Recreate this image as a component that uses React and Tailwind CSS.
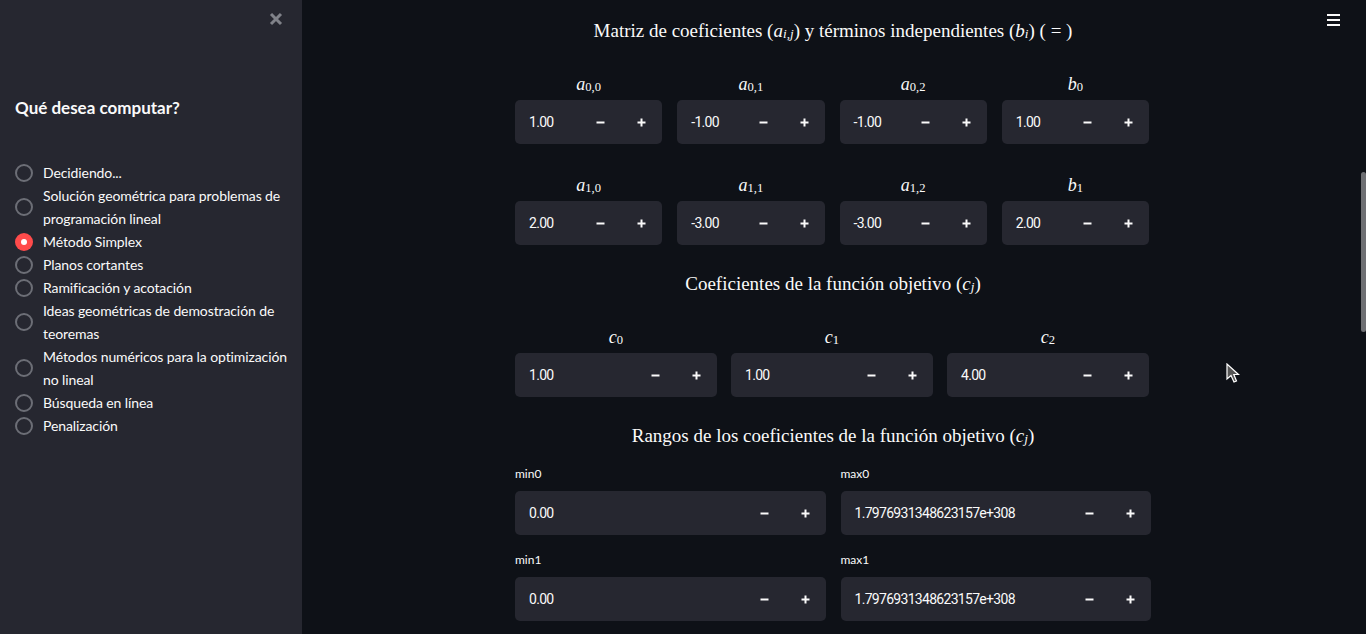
import React from 'react';

const options = [
  ['Decidiendo...'],
  ['Solución geométrica para problemas de', 'programación lineal'],
  ['Método Simplex'],
  ['Planos cortantes'],
  ['Ramificación y acotación'],
  ['Ideas geométricas de demostración de', 'teoremas'],
  ['Métodos numéricos para la optimización', 'no lineal'],
  ['Búsqueda en línea'],
  ['Penalización'],
];

const serif = { fontFamily: '"Liberation Serif", "DejaVu Serif", serif' };

// variable with subscript, KaTeX style
const Var = ({ v, sub, subItalic = false }) => (
  <span className="whitespace-nowrap">
    <span className="italic">{v}</span>
    <sub className={`relative top-[1px] text-[0.7em] ${subItalic ? 'italic' : ''}`}>{sub}</sub>
  </span>
);

const Heading = ({ children }) => (
  <div className="flex h-[26px] items-center justify-center text-[19px] text-[#fafafa]" style={serif}>
    <span>{children}</span>
  </div>
);

const MinusIcon = () => (
  <svg width="9" height="9" viewBox="0 0 9 9"><rect x="0.5" y="3.5" width="8" height="2" fill="#fafafa" /></svg>
);
const PlusIcon = () => (
  <svg width="9" height="9" viewBox="0 0 9 9">
    <rect x="0.5" y="3.5" width="8" height="2" fill="#fafafa" />
    <rect x="3.5" y="0.5" width="2" height="8" fill="#fafafa" />
  </svg>
);

const NumberInput = ({ value }) => (
  <div className="flex h-[44px] overflow-hidden rounded-[5px] bg-[#262730]">
    <div className="flex min-w-0 flex-1 items-center pl-[14px] text-[14px] text-[#fafafa] font-['Roboto'] tracking-[-0.7px]">
      {value}
    </div>
    <button type="button" className="flex w-[41px] items-center justify-center"><MinusIcon /></button>
    <button type="button" className="flex w-[41px] items-center justify-center"><PlusIcon /></button>
  </div>
);

const MathCell = ({ label, value }) => (
  <div className="flex flex-col">
    <div className="mb-[4px] flex h-[24px] items-center justify-center text-[18px] text-[#fafafa]" style={serif}>
      {label}
    </div>
    <NumberInput value={value} />
  </div>
);

const PlainCell = ({ label, value }) => (
  <div className="flex flex-col">
    <div className="mb-[9px] h-[16px] text-[12px] leading-[16px] text-[#fafafa]">{label}</div>
    <NumberInput value={value} />
  </div>
);

const Sidebar = () => (
  <div className="relative flex h-screen w-[302px] shrink-0 flex-col bg-[#262730] text-[#fafafa]">
    <button type="button" className="absolute left-[269px] top-[12px]">
      <svg width="14" height="14" viewBox="0 0 14 14">
        <path d="M2 2 L12 12 M12 2 L2 12" stroke="#808289" strokeWidth="3" />
      </svg>
    </button>
    <div className="mt-[96px] pl-[15px] text-[17px] font-bold leading-[24px]">Qué desea computar?</div>
    <div className="mt-[41px] flex flex-col pl-[15px]">
      {options.map((lines, i) => (
        <div key={i} className="flex items-center">
          {i === 2 ? (
            <span className="flex size-[18px] shrink-0 items-center justify-center rounded-full bg-[#ff4b4b]">
              <span className="size-[6px] rounded-full bg-white" />
            </span>
          ) : (
            <span className="size-[18px] shrink-0 rounded-full border-2 border-[#6c6e76]" />
          )}
          <div className="ml-[10px] text-[14px] leading-[23px] tracking-[-0.1px]">
            {lines.map((l) => (
              <div key={l} className="whitespace-nowrap">{l}</div>
            ))}
          </div>
        </div>
      ))}
    </div>
  </div>
);

export default function App() {
  return (
    <div className="flex h-screen w-full overflow-hidden bg-[#0e1117] font-['Lato'] text-[#fafafa]">
      <Sidebar />
      <div className="relative h-screen flex-1 pr-[2px]">
        <div className="mx-auto w-[636px] pt-[18px]">
          <Heading>
            Matriz de coeficientes (<Var v="a" sub="i,j" subItalic />) y términos independientes (<Var v="b" sub="i" subItalic />) ( = )
          </Heading>

          <div className="mt-[28px] grid w-[634px] grid-cols-4 gap-x-[15px]">
            <MathCell label={<Var v="a" sub="0,0" />} value="1.00" />
            <MathCell label={<Var v="a" sub="0,1" />} value="-1.00" />
            <MathCell label={<Var v="a" sub="0,2" />} value="-1.00" />
            <MathCell label={<Var v="b" sub="0" />} value="1.00" />
          </div>
          <div className="mt-[29px] grid w-[634px] grid-cols-4 gap-x-[15px]">
            <MathCell label={<Var v="a" sub="1,0" />} value="2.00" />
            <MathCell label={<Var v="a" sub="1,1" />} value="-3.00" />
            <MathCell label={<Var v="a" sub="1,2" />} value="-3.00" />
            <MathCell label={<Var v="b" sub="1" />} value="2.00" />
          </div>

          <div className="mt-[26px]">
            <Heading>
              Coeficientes de la función objetivo (<Var v="c" sub="j" subItalic />)
            </Heading>
          </div>
          <div className="mt-[28px] grid w-[634px] grid-cols-3 gap-x-[14px]">
            <MathCell label={<Var v="c" sub="0" />} value="1.00" />
            <MathCell label={<Var v="c" sub="1" />} value="1.00" />
            <MathCell label={<Var v="c" sub="2" />} value="4.00" />
          </div>

          <div className="mt-[26px]">
            <Heading>
              Rangos de los coeficientes de la función objetivo (<Var v="c" sub="j" subItalic />)
            </Heading>
          </div>
          <div className="mt-[17px] grid grid-cols-2 gap-x-[15px] gap-y-[17px]">
            <PlainCell label="min0" value="0.00" />
            <PlainCell label="max0" value="1.7976931348623157e+308" />
            <PlainCell label="min1" value="0.00" />
            <PlainCell label="max1" value="1.7976931348623157e+308" />
          </div>
        </div>

        {/* menu */}
        <button type="button" className="absolute right-[26px] top-[14px] flex flex-col gap-[3px]">
          <span className="h-[2px] w-[13px] bg-[#fafafa]" />
          <span className="h-[2px] w-[13px] bg-[#fafafa]" />
          <span className="h-[2px] w-[13px] bg-[#fafafa]" />
        </button>

        {/* scrollbar thumb */}
        <div className="absolute right-0 top-[172px] h-[160px] w-[5px] rounded-full bg-[#6e6f73]" />

        {/* mouse pointer */}
        <svg className="absolute left-[924px] top-[363px]" width="14" height="22" viewBox="0 0 14 22">
          <path d="M1 1 L1 16 L5 12.5 L8 19 L10.5 18 L7.8 11.5 L12.5 11.5 Z" fill="#555" stroke="#fff" strokeWidth="1.2" />
        </svg>
      </div>
    </div>
  );
}
